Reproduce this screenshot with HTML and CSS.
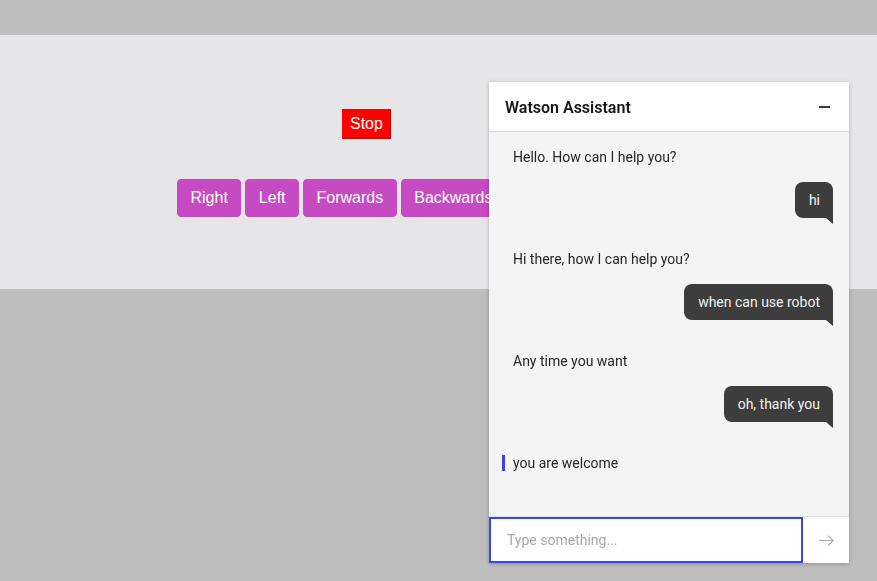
FILE: index.html
```html
<!DOCTYPE html>
<html>
<head>
<meta charset="utf-8">
<link rel="stylesheet" href="styles.css">
</head>
<body>
<section class="stage">
  <div class="stop-row"><button class="btn-stop">Stop</button></div>
  <div class="dir-row">
    <button class="btn-dir">Right</button>
    <button class="btn-dir">Left</button>
    <button class="btn-dir">Forwards</button>
    <button class="btn-dir">Backwards</button>
  </div>
</section>

<div class="chat">
  <div class="chat-header">
    <span class="chat-title">Watson Assistant</span>
    <span class="minimize"></span>
  </div>
  <div class="chat-body">
    <div class="msg-bot"><span class="bar"></span><span>Hello. How can I help you?</span></div>
    <div class="msg-user"><span class="bubble">hi</span></div>
    <div class="msg-bot"><span class="bar"></span><span>Hi there, how I can help you?</span></div>
    <div class="msg-user"><span class="bubble">when can use robot</span></div>
    <div class="msg-bot"><span class="bar"></span><span>Any time you want</span></div>
    <div class="msg-user"><span class="bubble">oh, thank you</span></div>
    <div class="msg-bot active"><span class="bar"></span><span>you are welcome</span></div>
  </div>
  <div class="chat-footer">
    <div class="input">Type something...</div>
    <div class="send">
      <svg width="17" height="17" viewBox="0 0 16 16"><path d="M9.3 3.7L13.1 7.5H1v1h12.1l-3.8 3.8.7.7 5-5-5-5z" fill="#a8a8a8"/></svg>
    </div>
  </div>
</div>
</body>
</html>
```
FILE: styles.css
```css
* { box-sizing: border-box; }
html, body { margin: 0; padding: 0; }
body {
  background: #bebebe;
  width: 877px;
  height: 581px;
  overflow: hidden;
  font-family: "Liberation Sans", Arial, sans-serif;
}
.stage {
  margin-top: 35px;
  height: 254px;
  background: #e6e6e8;
  padding-top: 74px;
}
.stop-row { padding-left: 342px; display: flex; }
.btn-stop {
  font-family: "Liberation Sans", Arial, sans-serif;
  font-size: 16px;
  line-height: 18px;
  color: #fff;
  background: #ff0000;
  border: 1px solid #ff0000;
  border-right-color: #c00000;
  border-bottom-color: #c00000;
  padding: 5px 7px;
  margin: 0;
  border-radius: 0;
}
.dir-row {
  display: flex;
  gap: 4px;
  padding-left: 177px;
  margin-top: 40px;
}
.btn-dir {
  font-family: "Liberation Sans", Arial, sans-serif;
  font-size: 16px;
  line-height: 24px;
  color: #fff;
  background: #c64bc3;
  border: 1px solid #c64bc3;
  border-radius: 4px;
  padding: 6px 12.5px;
  margin: 0;
}

.chat {
  position: fixed;
  left: 489px;
  top: 82px;
  width: 360px;
  height: 481px;
  display: flex;
  flex-direction: column;
  background: #f4f4f4;
  box-shadow: 0 1px 4px rgba(0,0,0,0.25);
  font-family: Roboto, "Noto Sans", sans-serif;
  font-size: 14px;
  color: #262626;
}
.chat-header {
  height: 50px;
  background: #fff;
  border-bottom: 1px solid #dcdcdc;
  display: flex;
  align-items: center;
  justify-content: space-between;
  padding: 1px 19px 0 16px;
}
.chat-title {
  font-size: 16px;
  font-weight: 600;
  color: #161616;
}
.minimize {
  width: 11px;
  height: 2px;
  background: #393939;
}
.chat-body {
  flex: 1;
  padding-top: 15px;
  display: flex;
  flex-direction: column;
}
.msg-bot {
  display: flex;
  align-items: center;
  gap: 8px;
  padding-left: 13px;
  line-height: 20px;
  margin-top: 31px;
}
.msg-bot:first-child { margin-top: 0; }
.bar { width: 3px; height: 16px; }
.msg-bot.active .bar { background: #3545f5; }
.msg-user {
  display: flex;
  justify-content: flex-end;
  padding-right: 16px;
  margin-top: 15px;
}
.bubble {
  position: relative;
  background: #3d3d3d;
  color: #f4f4f4;
  line-height: 20px;
  padding: 8px 13px 8px 14px;
  border-radius: 8px 8px 0 8px;
}
.bubble::after {
  content: "";
  position: absolute;
  right: 0;
  bottom: -6px;
  width: 0;
  height: 0;
  border-top: 6px solid #3d3d3d;
  border-left: 7px solid transparent;
}
.chat-footer {
  height: 47px;
  border-top: 1px solid #e0e0e0;
  background: #fff;
  display: flex;
}
.input {
  width: 314px;
  height: 46px;
  border: 2px solid #3545f5;
  padding-left: 16px;
  display: flex;
  align-items: center;
  color: #a8a8a8;
  font-size: 14px;
}
.send {
  flex: 1;
  display: flex;
  align-items: center;
  justify-content: center;
}
.send svg { display: block; }
```
